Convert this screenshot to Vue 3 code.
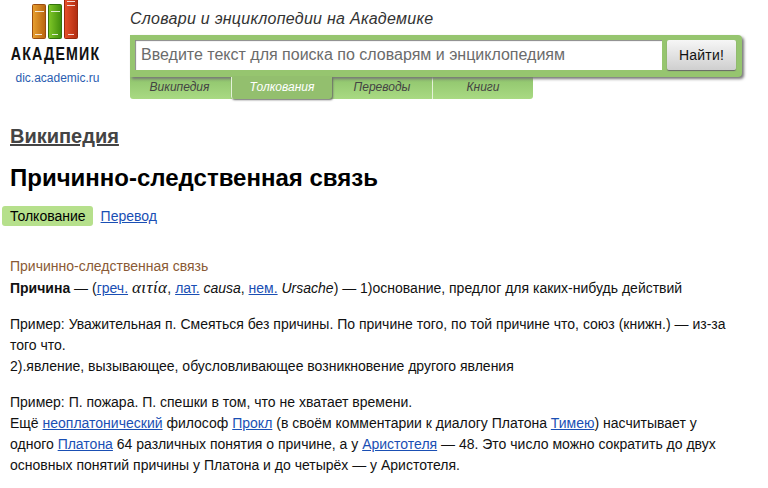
<script setup>
const tabs = [
  { label: 'Википедия', active: false },
  { label: 'Толкования', active: true },
  { label: 'Переводы', active: false },
  { label: 'Книги', active: false },
]
</script>

<template>
  <div class="page">
    <header class="header">
      <div class="brand">
        <svg class="books" width="66" height="40" viewBox="0 0 66 40" aria-hidden="true">
          <defs>
            <linearGradient id="bo" x1="0" x2="1" y1="0" y2="0"><stop offset="0" stop-color="#e8a030"/><stop offset="1" stop-color="#b8640f"/></linearGradient>
            <linearGradient id="bg" x1="0" x2="1" y1="0" y2="0"><stop offset="0" stop-color="#80c828"/><stop offset="1" stop-color="#3f8c0c"/></linearGradient>
            <linearGradient id="br" x1="0" x2="1" y1="0" y2="0"><stop offset="0" stop-color="#e8502a"/><stop offset="1" stop-color="#b02c10"/></linearGradient>
          </defs>
          <rect x="0.5" y="4.5" width="13" height="34" rx="1" fill="url(#bo)" stroke="#9a4c10"/>
          <rect x="16.5" y="4.5" width="13" height="34" rx="1" fill="url(#bg)" stroke="#33740c"/>
          <rect x="32.5" y="-2.5" width="13" height="41" rx="1" fill="url(#br)" stroke="#95280e"/>
          <path d="M3 11.5h9M3 34.5h7M19 11.5h9M20 34.5h6M35 1.5h8M35 5.5h8M36 34.5h6" stroke="#fff" stroke-opacity=".8" fill="none"/>
        </svg>
        <div class="wordmark">АКАДЕМИК</div>
        <a class="domain">dic.academic.ru</a>
      </div>
      <div class="search-area">
        <div class="tagline">Словари и энциклопедии на Академике</div>
        <div class="search-box">
          <div class="input">Введите текст для поиска по словарям и энциклопедиям</div>
          <button class="go">Найти!</button>
        </div>
        <nav class="tabs">
          <span v-for="t in tabs" :key="t.label" class="tab" :class="{ active: t.active }">{{ t.label }}</span>
        </nav>
      </div>
    </header>

    <main class="content">
      <a class="source">Википедия</a>
      <h1 class="title">Причинно-следственная связь</h1>
      <div class="switch">
        <span class="pill">Толкование</span>
        <a class="link">Перевод</a>
      </div>
      <article class="article">
        <div class="term">Причинно-следственная связь</div>
        <p class="first"><b>Причина</b> — (<a class="link">греч.</a> <i class="greek">αιτία</i>, <a class="link">лат.</a> <i>causa</i>, <a class="link">нем.</a> <i>Ursache</i>) — 1)основание, предлог для каких-нибудь действий</p>
        <p>Пример: Уважительная п. Смеяться без причины. По причине того, по той причине что, союз (книжн.) — из-за того что.<br>2).явление, вызывающее, обусловливающее возникновение другого явления</p>
        <p>Пример: П. пожара. П. спешки в том, что не хватает времени.<br>Ещё <a class="link">неоплатонический</a> философ <a class="link">Прокл</a> (в своём комментарии к диалогу Платона <a class="link">Тимею</a>) насчитывает у одного <a class="link">Платона</a> 64 различных понятия о причине, а у <a class="link">Аристотеля</a> — 48. Это число можно сократить до двух основных понятий причины у Платона и до четырёх — у Аристотеля.</p>
      </article>
    </main>
  </div>
</template>

<style>
html, body { margin: 0; background: #fff; overflow: hidden; }
</style>

<style scoped>
.page {
  width: 768px;
  height: 488px;
  overflow: hidden;
  font-family: "Liberation Sans", Arial, sans-serif;
  color: #000;
  background: #fff;
}
.header { display: flex; height: 100px; }
.brand {
  width: 130px;
  flex: none;
  display: flex;
  flex-direction: column;
  align-items: flex-start;
}
.books { display: block; margin: 0 0 0 32px; }
.wordmark {
  width: 112px;
  margin-left: -1px;
  text-align: center;
  white-space: nowrap;
  font-weight: 700;
  font-size: 18px;
  line-height: 20px;
  letter-spacing: 1.5px;
  margin-top: 4px;
  color: #111;
  transform: scaleX(.79);
}
.domain {
  width: 115px;
  text-align: center;
  font-size: 12px;
  line-height: 14px;
  margin-top: 7px;
  color: #2a5db0;
}
.search-area { width: 612px; }
.tagline {
  font-size: 16px;
  font-style: italic;
  line-height: 18px;
  letter-spacing: .27px;
  color: #333;
  padding-top: 10px;
  height: 25px;
}
.search-box {
  display: flex;
  gap: 5px;
  box-sizing: border-box;
  height: 42px;
  padding: 5px 6px 7px 5px;
  background: #96c56f;
  border-radius: 0 4px 4px 0;
  box-shadow: 2px 2px 3px #777;
  position: relative;
}
.input {
  flex: 1;
  box-sizing: border-box;
  background: #fff;
  font-size: 16px;
  line-height: 30px;
  padding-left: 6px;
  color: #6b6b6b;
  box-shadow: inset 1px 1px 1px #888;
}
.go {
  width: 69px;
  height: 30px;
  padding: 0;
  border: 0;
  border-radius: 2px;
  background: linear-gradient(#f6f6f6, #cfcfcf);
  box-shadow: 0 1px 1px #666;
  font: 14px/30px "Liberation Sans", Arial, sans-serif;
  letter-spacing: .2px;
  color: #111;
}
.tabs {
  display: flex;
  width: 403px;
  height: 22px;
  background: linear-gradient(#8fc46c, #a9da83);
  border-radius: 0 0 3px 3px;
}
.tab {
  width: 101px;
  box-sizing: border-box;
  text-align: center;
  font-size: 12px;
  font-style: italic;
  line-height: 20px;
  color: #444;
  border-right: 1px solid #e4f2d8;
}
.tab:first-child { width: 101px; border-right: 0; padding-right: 2px; }
.tab:last-child { width: 100px; border-right: 0; }
.tab.active {
  color: #fff;
  background: #93bf6e;
  border-right: 0;
  border-left: 1px solid #e4f2d8;
  border-radius: 0 0 3px 3px;
  box-shadow: 1px 1px 2px #666;
  position: relative;
}
.content { padding: 0 10px; }
.source {
  display: block;
  margin-top: 24px;
  font-size: 20px;
  font-weight: 700;
  line-height: 24px;
  color: #444;
  text-decoration: underline;
}
.title {
  margin: 15px 0 0;
  font-size: 24px;
  line-height: 30px;
  font-weight: 700;
}
.switch {
  display: flex;
  align-items: center;
  gap: 8px;
  margin: 13px 0 0 -8px;
  font-size: 14px;
  line-height: 20px;
}
.pill {
  padding: 0 7px 0 8px;
  height: 20px;
  background: #b6e08c;
  border-radius: 3px;
}
.link { color: #1a4fb4; text-decoration: underline; }
.article {
  margin-top: 30px;
  width: 730px;
  font-size: 14px;
  line-height: 21px;
  color: #111;
}
.term { color: #8a5a35; }
.article p { margin: 0 0 15px; }
.article p.first { margin-top: 1px; }
.greek { font-family: "Liberation Serif", serif; font-size: 17px; letter-spacing: .4px; line-height: 1; }
</style>
